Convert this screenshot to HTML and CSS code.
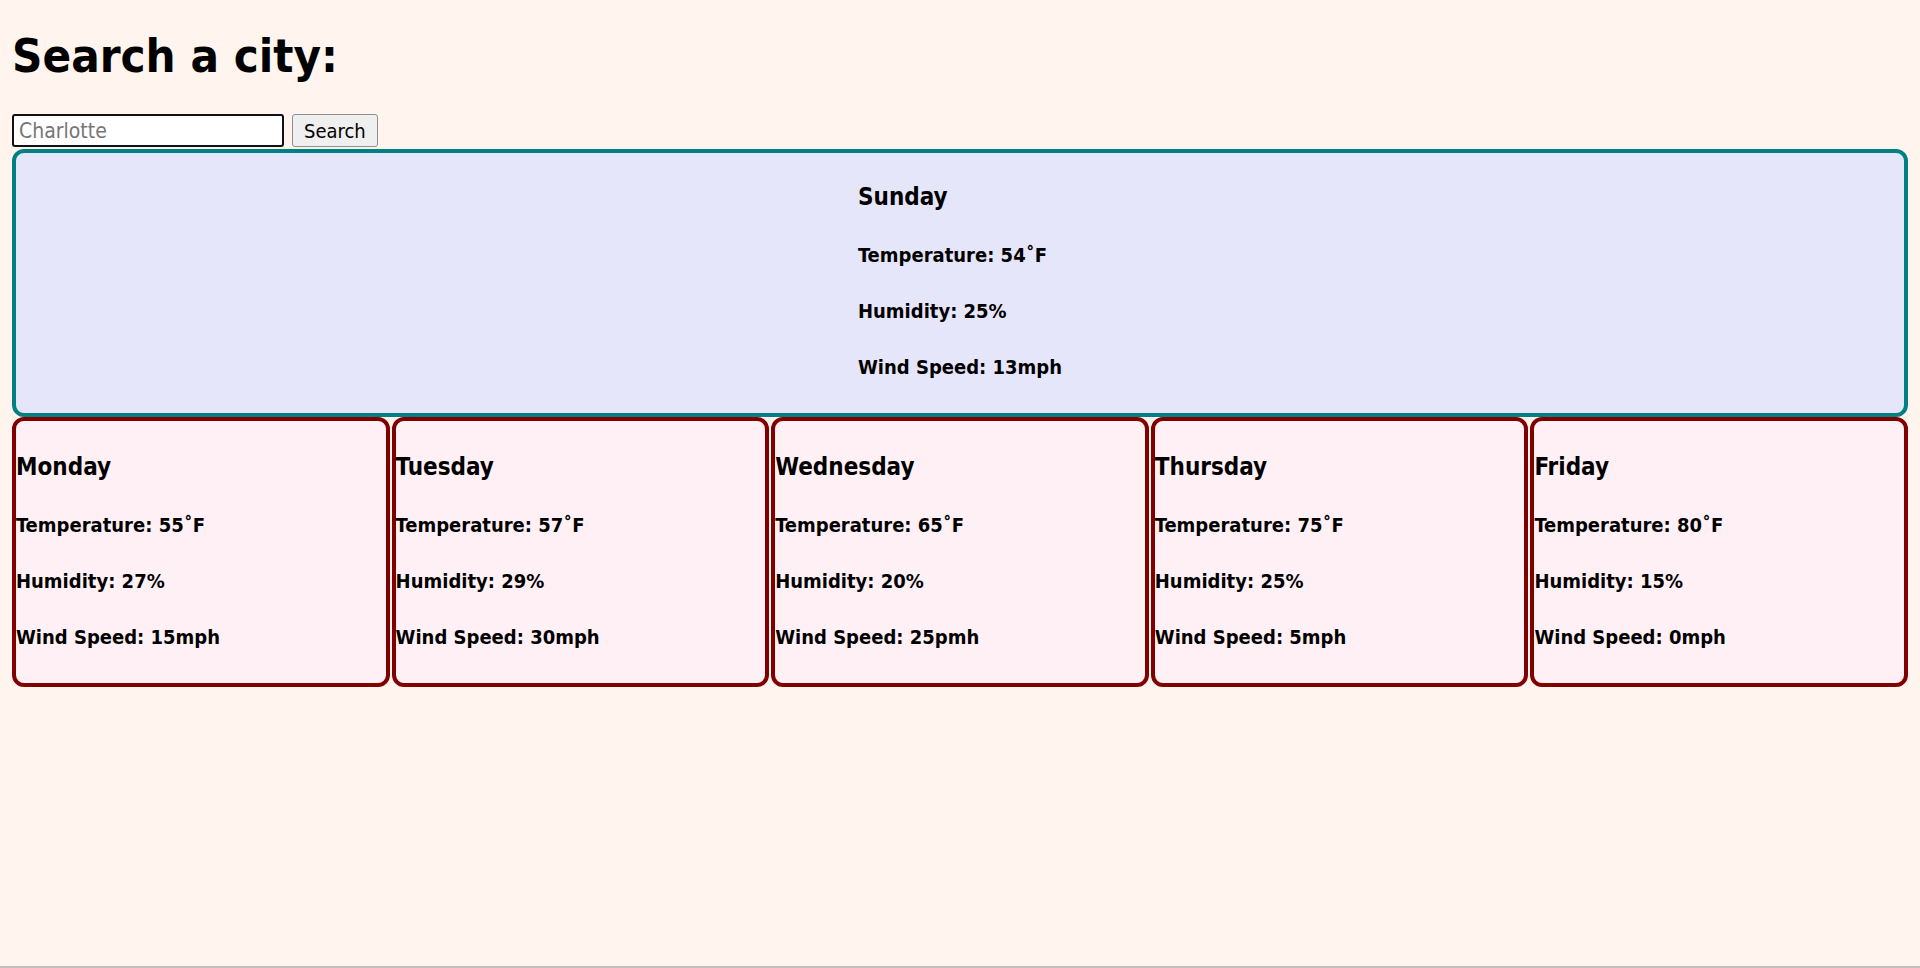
FILE: index.html
```html
<!DOCTYPE html>
<html lang="en">
<head>
<meta charset="utf-8">
<title>Weather</title>
<link rel="stylesheet" href="styles.css">
</head>
<body>
<h1 class="title">Search a city:</h1>
<form class="search">
  <input class="search-input" type="text" placeholder="Charlotte">
  <button class="search-btn" type="button">Search</button>
</form>
<section class="today">
  <div class="today-inner">
    <h3 class="day">Sunday</h3>
    <p class="stat">Temperature: 54˚F</p>
    <p class="stat">Humidity: 25%</p>
    <p class="stat">Wind Speed: 13mph</p>
  </div>
</section>
<section class="week">
  <div class="card">
    <h3 class="day">Monday</h3>
    <p class="stat">Temperature: 55˚F</p>
    <p class="stat">Humidity: 27%</p>
    <p class="stat">Wind Speed: 15mph</p>
  </div>
  <div class="card">
    <h3 class="day">Tuesday</h3>
    <p class="stat">Temperature: 57˚F</p>
    <p class="stat">Humidity: 29%</p>
    <p class="stat">Wind Speed: 30mph</p>
  </div>
  <div class="card">
    <h3 class="day">Wednesday</h3>
    <p class="stat">Temperature: 65˚F</p>
    <p class="stat">Humidity: 20%</p>
    <p class="stat">Wind Speed: 25pmh</p>
  </div>
  <div class="card">
    <h3 class="day">Thursday</h3>
    <p class="stat">Temperature: 75˚F</p>
    <p class="stat">Humidity: 25%</p>
    <p class="stat">Wind Speed: 5mph</p>
  </div>
  <div class="card">
    <h3 class="day">Friday</h3>
    <p class="stat">Temperature: 80˚F</p>
    <p class="stat">Humidity: 15%</p>
    <p class="stat">Wind Speed: 0mph</p>
  </div>
</section>
</body>
</html>
```
FILE: styles.css
```css
html {
  min-height: 100vh;
  box-sizing: border-box;
  border-bottom: 2px solid #c2bfbe;
  background: #fff5ee;
}

body {
  margin: 0;
  padding: 0 12px;
  font-family: "DejaVu Sans Condensed", "DejaVu Sans", sans-serif;
  font-stretch: condensed;
  color: #000;
}

.title {
  margin: 28px 0 30px 0;
  font-size: 47px;
  line-height: 56px;
  font-weight: bold;
}

.search {
  display: flex;
  gap: 8px;
  margin: 0 0 2px 0;
}

.search-input {
  box-sizing: border-box;
  width: 272px;
  height: 33px;
  border: 2px solid #111;
  border-radius: 3px;
  background: #fff;
  padding: 0 5px;
  font-family: inherit;
  font-size: 21px;
  outline: none;
}

.search-input::placeholder {
  color: #767676;
}

.search-btn {
  box-sizing: border-box;
  height: 33px;
  padding: 0 11px;
  border: 1px solid #8f8f8f;
  border-radius: 3px;
  background: #efefef;
  color: #000;
  font-family: inherit;
  font-size: 20px;
}

.today {
  box-sizing: border-box;
  height: 268px;
  border: 4px solid #008080;
  border-radius: 12px;
  background: #e6e6fa;
  display: flex;
  justify-content: center;
  padding: 30px 0 34px 0;
}

.week {
  display: flex;
  gap: 2px;
}

.card {
  flex: 1;
  box-sizing: border-box;
  height: 270px;
  border: 4px solid #800000;
  border-radius: 12px;
  background: #fff0f5;
  padding: 32px 0 34px 0;
}

.day {
  margin: 0;
  font-size: 24px;
  line-height: 28px;
  font-weight: bold;
}

.stat {
  margin: 32px 0 0 0;
  font-size: 20px;
  line-height: 24px;
  font-weight: bold;
}
```
